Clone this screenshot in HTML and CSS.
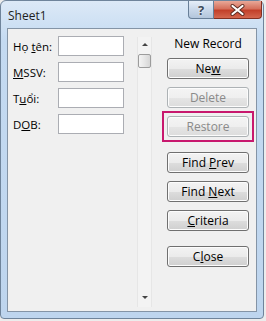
FILE: index.html
```html
<!DOCTYPE html>
<html lang="vi">
<head>
<meta charset="utf-8"/>
<meta content="width=device-width, initial-scale=1.0" name="viewport"/>
<title>Sheet1</title>
<link rel="stylesheet" href="styles.css">
</head>
<body>
<div class="window">
  <div class="titlebar">
    <span class="title">Sheet1</span>
    <div class="caption">
      <span class="cap help">?</span>
      <span class="cap close">
        <svg width="15" height="12" viewBox="0 0 15 12"><path d="M2.5 2 L12.5 10 M12.5 2 L2.5 10" stroke="#5a2a20" stroke-width="4" stroke-linecap="round"/><path d="M2.5 2 L12.5 10 M12.5 2 L2.5 10" stroke="#fff" stroke-width="2.2" stroke-linecap="round"/></svg>
      </span>
    </div>
  </div>
  <div class="client">
    <div class="fields">
      <div class="row"><label>Họ <u>t</u>ên:</label><input type="text"/></div>
      <div class="row"><label><u>M</u>SSV:</label><input type="text"/></div>
      <div class="row"><label>T<u>u</u>ổi:</label><input type="text"/></div>
      <div class="row"><label>D<u>O</u>B:</label><input type="text"/></div>
    </div>
    <div class="scrollbar">
      <span class="arrow up"></span>
      <span class="thumb"></span>
      <span class="track"></span>
      <span class="arrow down"></span>
    </div>
    <div class="actions">
      <div class="record">New Record</div>
      <button>Ne<u>w</u></button>
      <button disabled>Delete</button>
      <div class="marked"><button disabled>Restore</button></div>
      <button class="sep">Find <u>P</u>rev</button>
      <button>Find <u>N</u>ext</button>
      <button><u>C</u>riteria</button>
      <button class="sep">C<u>l</u>ose</button>
    </div>
  </div>
</div>
</body>
</html>
```

FILE: styles.css
```css
body {
  margin: 0;
  background: #ececec;
  font-family: 'Open Sans', 'Noto Sans', sans-serif;
  font-size: 11.5px;
  color: #000;
}
.window {
  width: 256px;
  height: 317px;
  border: 1px solid #6f849b;
  border-radius: 6px 6px 4px 4px;
  background: linear-gradient(#dce9f7, #c4daf1 40px, #bed5ee);
  padding: 0 0 0 6px;
  box-sizing: content-box;
}
.titlebar {
  display: flex;
  justify-content: space-between;
  height: 27px;
}
.title {
  padding: 6px 0 0 1px;
  font-size: 12px;
  color: #1e1e1e;
}
.caption {
  display: flex;
  margin-right: 1px;
  height: 18px;
}
.cap {
  display: flex;
  align-items: center;
  justify-content: center;
  border: 1px solid #687f98;
  border-top: none;
}
.help {
  width: 24px;
  border-radius: 0 0 0 4px;
  background: linear-gradient(#e6eef8, #c9d8ea 50%, #b3c6dc);
  color: #3d4a5a;
  font-weight: bold;
  font-size: 13px;
  text-shadow: 0 0 2px #fff;
}
.close {
  width: 47px;
  border-left: none;
  border-color: #833022;
  border-radius: 0 0 4px 0;
  background: linear-gradient(#e9a898, #d5705c 45%, #c2402a 55%, #d4674f);
}
.client {
  display: flex;
  align-items: flex-start;
  width: 248px;
  height: 282px;
  border: 1px solid #8494a6;
  background: #f0f0f0;
  box-sizing: content-box;
}
.fields {
  display: flex;
  flex-direction: column;
  gap: 6px;
  padding: 7px 0 0 5px;
}
.row {
  display: flex;
  align-items: center;
  height: 20px;
}
.row label {
  width: 45px;
}
.row input {
  width: 66px;
  height: 20px;
  box-sizing: border-box;
  border: 1px solid #abadb3;
  background: #fff;
  margin: 0;
  padding: 0;
}
.scrollbar {
  display: flex;
  flex-direction: column;
  align-items: center;
  width: 15px;
  height: 270px;
  margin: 8px 0 0 13px;
  box-sizing: border-box;
  border-left: 1px solid #e6e6e6;
  border-right: 1px solid #e6e6e6;
  background: #f3f3f3;
}
.arrow {
  width: 0;
  height: 0;
  border-left: 3px solid transparent;
  border-right: 3px solid transparent;
}
.arrow.up {
  margin-top: 6px;
  border-bottom: 3px solid #444;
}
.arrow.down {
  margin-bottom: 8px;
  border-top: 3px solid #444;
}
.thumb {
  width: 13px;
  height: 14px;
  margin-top: 8px;
  box-sizing: border-box;
  border: 1px solid #9c9c9c;
  border-radius: 2px;
  background: linear-gradient(90deg, #f4f4f4, #e6e6e6 50%, #d6d6d6);
}
.track {
  flex: 1;
}
.actions {
  display: flex;
  flex-direction: column;
  width: 82px;
  margin: 6px 0 0 15px;
}
.record {
  text-align: center;
  height: 16px;
  margin-bottom: 7px;
  font-size: 12px;
}
.actions button {
  height: 21px;
  margin-bottom: 8px;
  padding: 0;
  border: 1px solid #707070;
  border-radius: 3px;
  background: linear-gradient(#f3f3f3, #ebebeb 50%, #dddddd 51%, #cfcfcf);
  box-shadow: inset 0 0 0 1px #fcfcfc;
  font-family: inherit;
  font-size: 12px;
  color: #000;
  line-height: 17px;
}
.actions button:disabled {
  color: #8a8a8a;
  border-color: #adb2b5;
  background: linear-gradient(#f4f4f4, #efefef 50%, #e5e5e5 51%, #dcdcdc);
}
.actions button.sep {
  margin-top: 7px;
}
.marked {
  display: flex;
  flex-direction: column;
  margin: -5px -5px 3px -5px;
  padding: 3px;
  border: 2px solid #c8186e;
}
.marked button {
  margin-bottom: 0 !important;
}
```
